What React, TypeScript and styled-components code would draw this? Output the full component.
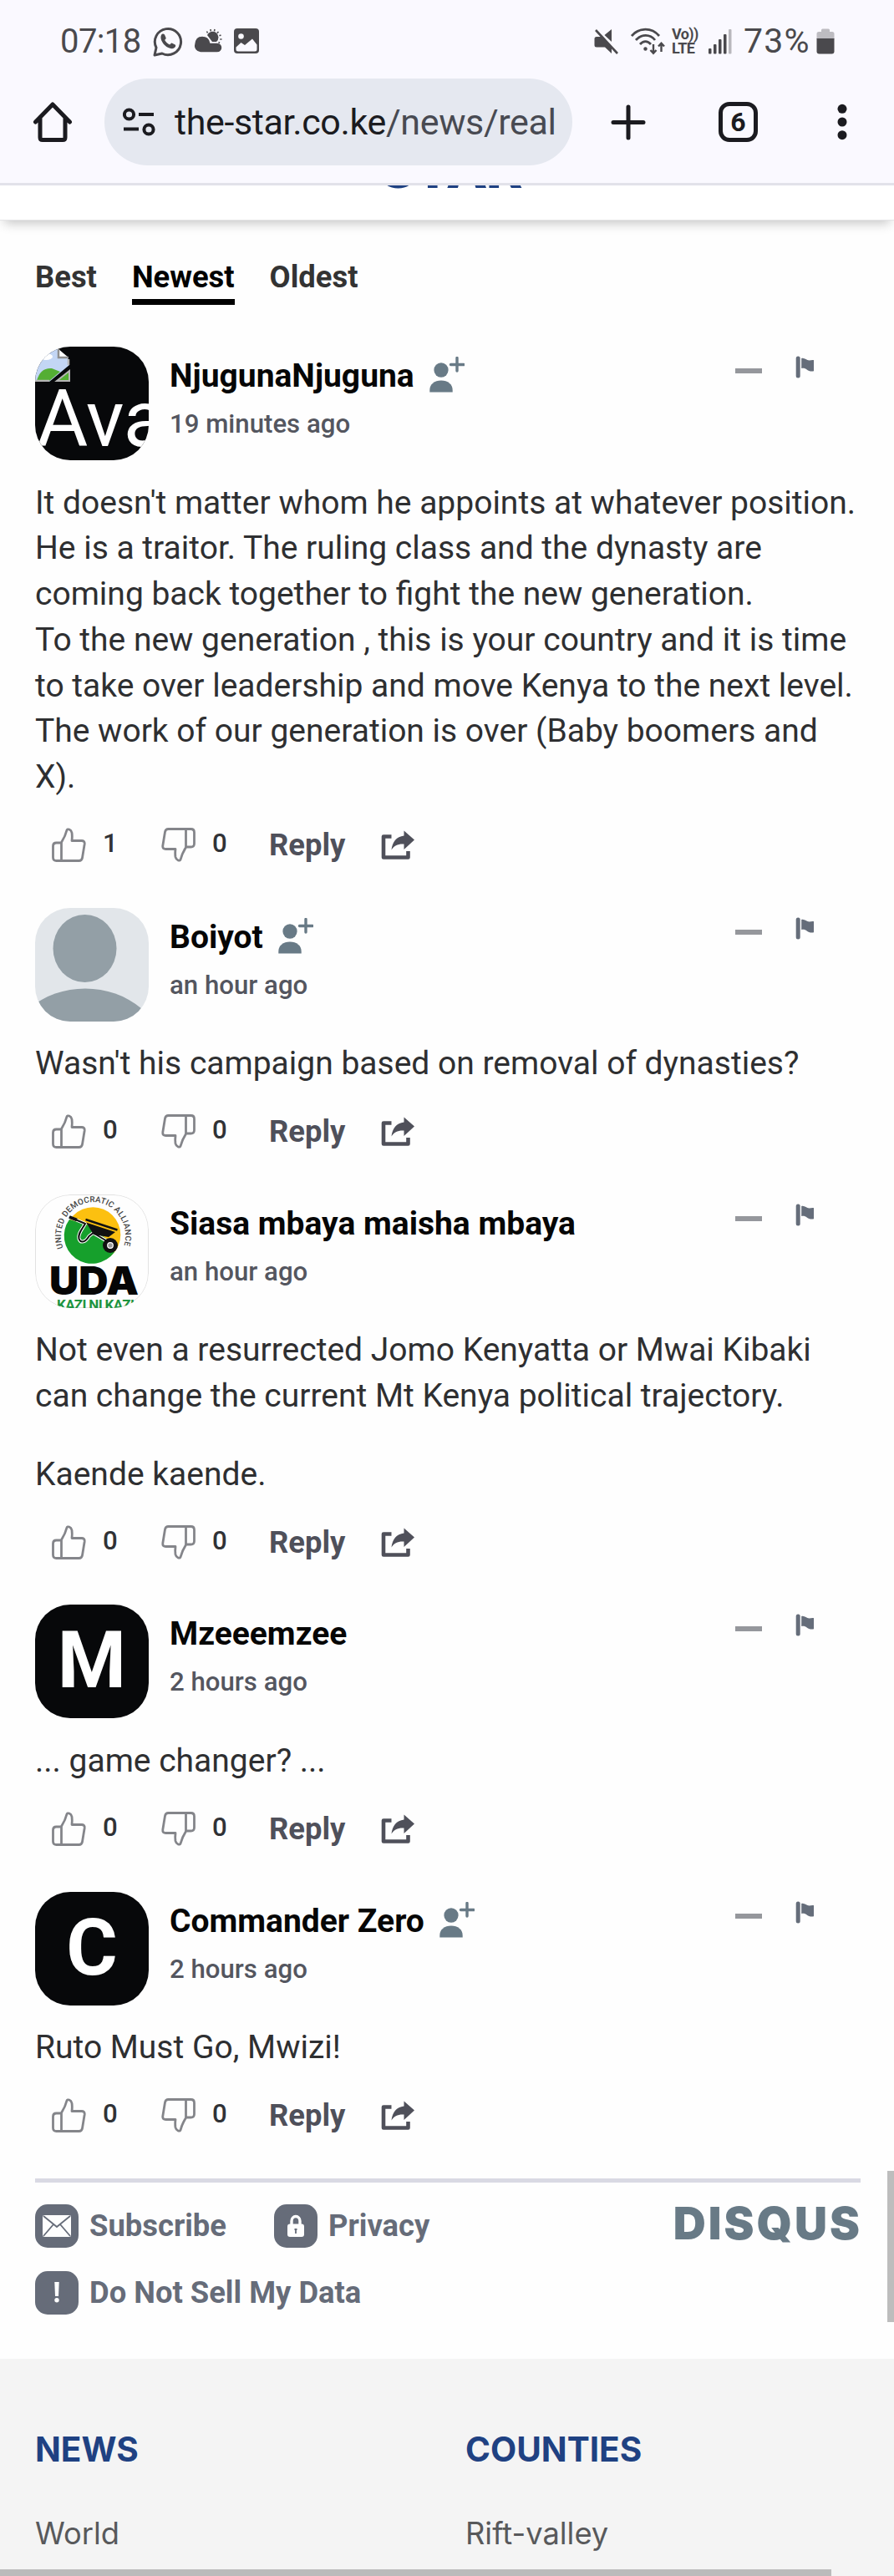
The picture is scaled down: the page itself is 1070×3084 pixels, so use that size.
import type { ReactNode } from "react";
import styled, { createGlobalStyle } from "styled-components";

interface IComment {
  id: number;
  name: string;
  time: string;
  text: string[];
  likes: number;
  canFollow: boolean;
  avatar: ReactNode;
}

// styled-components

const GlobalStyle = createGlobalStyle`
  * {
    box-sizing: border-box;
  }

  body {
    margin: 0;
    background-color: #fefefe;
    font-family: Roboto, "Liberation Sans", sans-serif;
  }

  svg {
    display: block;
    flex: none;
  }
`;

const Screen = styled.div`
  position: relative;
  width: 1070px;
  height: 3084px;
  overflow: hidden;
`;

const Browser = styled.header`
  height: 222px;
  background-color: #faf9ff;
  border-bottom: 3px solid #e2e2ea;
`;

const StatusBar = styled.div`
  display: flex;
  align-items: center;
  height: 94px;
  padding: 4px 71px 0 72px;
  color: #4a494d;
`;

const Clock = styled.span`
  width: 111px;
  font-size: 40px;
  letter-spacing: -0.6px;
`;

const StatusGroup = styled.div`
  display: flex;
  align-items: center;
  gap: 13px;
`;

const StatusRight = styled.div`
  display: flex;
  align-items: center;
  margin-left: auto;
`;

const WifiSlot = styled.div`
  margin-left: 14px;
`;

const VoLte = styled.div`
  width: 51px;
  padding-left: 7px;
  font-size: 18px;
  font-weight: 700;
  line-height: 17px;
  letter-spacing: -0.6px;
  white-space: nowrap;
`;

const Percent = styled.span`
  width: 87px;
  margin-left: 14px;
  font-size: 41px;
  letter-spacing: 1.2px;
`;

const Toolbar = styled.div`
  display: flex;
  align-items: center;
  height: 104px;
  padding-left: 39px;
`;

const UrlPill = styled.div`
  display: flex;
  align-items: center;
  width: 560px;
  height: 104px;
  margin: 0 46px 0 38px;
  padding-left: 22px;
  border-radius: 52px;
  background-color: #e5e8f0;
`;

const Url = styled.span`
  margin-left: 23px;
  font-size: 43px;
  letter-spacing: -0.36px;
  color: #1b1b20;
  white-space: nowrap;

  span {
    color: #484a52;
  }
`;

const TabCount = styled.div`
  display: flex;
  align-items: center;
  justify-content: center;
  width: 47px;
  height: 48px;
  margin: 0 95px 0 87px;
  border: 5px solid #1b1b20;
  border-radius: 13px;
  font-size: 32px;
  font-weight: 700;
  color: #1b1b20;
`;

const SiteHeader = styled.div`
  position: relative;
  height: 42px;
  background-color: #fff;
  border-bottom: 1px solid #e4e4e6;
  box-shadow: 0 8px 14px -5px rgba(0, 0, 0, 0.24);
`;

const LogoClip = styled.div`
  height: 41px;
  overflow: hidden;
`;

const Logo = styled.div`
  width: 180px;
  margin: -60px 0 0 454px;
  font-size: 68px;
  font-weight: 900;
  line-height: 80px;
  color: #1f4182;
`;

const Thread = styled.main`
  height: 2560px;
  padding: 47px 40px 0 42px;
`;

const SortTabs = styled.nav`
  display: flex;
  gap: 42px;
  height: 104px;
`;

const SortTab = styled.span<{ $active?: boolean }>`
  height: 54px;
  border-bottom: ${(props) => (props.$active ? "7px solid #000" : "none")};
  color: ${(props) => (props.$active ? "#000" : "#333")};
  font-size: 36.4px;
  font-weight: 700;
  line-height: 42px;
`;

const Comment = styled.article`
  margin-bottom: 44.8px;
`;

const CommentHead = styled.div`
  display: flex;
  height: 136px;
`;

const Avatar = styled.div<{ $bg?: string }>`
  flex: none;
  width: 136px;
  height: 136px;
  border-radius: 42px;
  overflow: hidden;
  background-color: ${(props) => props.$bg ?? "#07080a"};
`;

const Initial = styled.div`
  text-align: center;
  color: #fff;
  font-size: 94px;
  font-weight: 700;
  line-height: 134px;
`;

const AltText = styled.div`
  margin: -2px 0 0 2px;
  color: #fff;
  font-size: 94px;
  line-height: 94px;
`;

const Meta = styled.div`
  flex: 1;
  padding: 12px 0 0 25px;
`;

const NameRow = styled.div`
  display: flex;
  gap: 18px;
  height: 46px;
`;

const Name = styled.span`
  font-size: 39px;
  font-weight: 700;
  line-height: 46px;
  color: #060606;
`;

const Time = styled.div`
  margin-top: 17px;
  font-size: 31.2px;
  font-weight: 500;
  line-height: 36px;
  color: #54565f;
`;

const HeadTools = styled.div`
  display: flex;
  align-items: flex-start;
  gap: 40px;
  padding: 11px 55px 0 0;
`;

const Collapse = styled.div`
  width: 32px;
  height: 6px;
  margin-top: 15px;
  background-color: #95979c;
`;

const Message = styled.div`
  margin: 23.6px -20px 24px 0;
  font-size: 39px;
  line-height: 54.75px;
  color: #2e2f31;
  white-space: pre-line;

  p {
    margin: 0 0 39px;
  }

  p:last-child {
    margin-bottom: 0;
  }
`;

const Actions = styled.div`
  display: flex;
  align-items: center;
  height: 60px;
  padding-left: 20px;
  color: #4f505a;
`;

const Vote = styled.div`
  display: flex;
  align-items: center;
  gap: 20px;
  width: 131px;
  font-size: 31.2px;
  font-weight: 500;
  line-height: 36px;
  color: #303236;

  span {
    margin-top: -3px;
  }
`;

const Reply = styled.span`
  width: 134px;
  margin-left: -2px;
  font-size: 36.4px;
  font-weight: 700;
`;

const ThreadFooter = styled.div`
  display: flex;
  justify-content: space-between;
  margin-top: 1px;
  padding-top: 26px;
  border-top: 5px solid #d9d9e3;
`;

const FooterLinks = styled.div`
  display: flex;
  flex-wrap: wrap;
  gap: 28px 57px;
  width: 500px;
`;

const FooterLink = styled.div`
  display: flex;
  align-items: center;
  gap: 13px;
  font-size: 36.4px;
  font-weight: 700;
  line-height: 52px;
  color: #666c79;
`;

const Badge = styled.div`
  display: flex;
  align-items: center;
  justify-content: center;
  width: 52px;
  height: 52px;
  border-radius: 15px;
  background-color: #666c79;
`;

const Disqus = styled.div`
  height: 52px;
  font-family: Inter, sans-serif;
  font-size: 54px;
  font-weight: 900;
  line-height: 46px;
  letter-spacing: 3px;
  margin-right: -2px;
  color: #687a86;
`;

const SiteFooter = styled.footer`
  display: grid;
  grid-template-columns: 515px 1fr;
  height: 260px;
  padding: 84px 42px 0;
  background-color: #f4f4f4;
  font-family: Inter, sans-serif;
`;

const FooterTitle = styled.h3`
  margin: 0 0 51px;
  font-size: 40.5px;
  font-weight: 700;
  line-height: 50px;
  color: #1f4182;
`;

const FooterItem = styled.div`
  font-size: 36.3px;
  line-height: 48px;
  color: #58595b;
`;

const ScrollY = styled.div`
  position: absolute;
  right: 0;
  top: 2599px;
  width: 8px;
  height: 181px;
  background-color: #bdbdbd;
`;

const ScrollX = styled.div`
  position: absolute;
  left: 0;
  bottom: 0;
  width: 995px;
  height: 8px;
  background-color: #bbb;
`;

// icons

const WhatsAppIcon = () => (
  <svg width="36" height="37" viewBox="0 0 36 37" fill="none">
    <path d="M2 35l2-9A15.6 15.6 0 1 1 11 33z" stroke="#4a494d" strokeWidth="3" strokeLinejoin="round" />
    <path
      d="M10 11c1-2 3-2 4-.4l1.6 3.7c.4 1-.8 1.800-1.400 2.800 1.500 2.600 3.300 4.200 6 5.400 1-.8 1.700-2.300 2.900-1.800l3.500 1.700c1.300.8.3 3-1 3.900-3 2.200-8 .2-11-2.700C11 20 8.300 15 10 11z"
      fill="#4a494d"
    />
  </svg>
);

const WeatherIcon = () => (
  <svg width="34" height="30" viewBox="0 0 34 30" fill="#4a494d">
    <path d="M16 8a7 7 0 1 1 11 8H22z" />
    <path d="M8 29a8 8 0 0 1-7.500-10C1 12 5 9 10 9c5 0 9 3 10 8h8a6 6 0 0 1 0 12z" stroke="#faf9ff" strokeWidth="1.500" />
    <path
      d="M15.500 3.500l1 2M20 1l.3 2.300M25 1l-.5 2.300M29.500 4l-1.600 1.600M32.500 8l-2 .8M33.500 13h-2.200M31 17.500l-1.500-1"
      stroke="#4a494d"
      strokeWidth="1.600"
    />
  </svg>
);

const PictureIcon = () => (
  <svg width="32" height="32" viewBox="0 0 32 32">
    <rect x="1" y="1" width="30" height="30" rx="4" fill="#4a494d" />
    <circle cx="9.500" cy="10.500" r="3.300" fill="#faf9ff" />
    <path d="M3.500 23.500l6-5.500 4.500 3 9-7.500 5.500 7V26a2.500 2.500 0 0 1-2.500 2.500H6A2.500 2.500 0 0 1 3.500 26z" fill="#faf9ff" />
  </svg>
);

const MuteIcon = () => (
  <svg width="30" height="31" viewBox="0 0 30 31" fill="#4a494d">
    <path d="M12.500 8L21 1v15zM3 10h5.500L21 22.500V30l-8-7.500H3a2.500 2.500 0 0 1-2.500-2.500v-7.500A2.500 2.500 0 0 1 3 10z" />
    <path d="M2 2l26 28" stroke="#4a494d" strokeWidth="2.600" />
  </svg>
);

const WifiIcon = () => (
  <svg width="42" height="33" viewBox="0 0 42 33" fill="none" stroke="#4a494d" strokeWidth="2.800">
    <path d="M1 10C10-.5 25-.5 34 10M6 15c7-7.500 17-7.500 23 0M11 20c4-4.500 9-4.500 13 0" />
    <circle cx="17.500" cy="25.500" r="2.200" fill="#4a494d" stroke="none" />
    <path d="M27 20v10M23.500 27l3.500 3.700 3.500-3.700M36.500 29V19M33 22.500l3.500-3.700 3.500 3.700" strokeWidth="2.400" />
  </svg>
);

const SignalIcon = () => (
  <svg width="28" height="31" viewBox="0 0 28 31" fill="#4a494d">
    <rect x="0" y="24" width="3.500" height="6.500" rx="1" />
    <rect x="6" y="19" width="3.500" height="11.500" rx="1" />
    <rect x="12" y="13" width="3.500" height="17.500" rx="1" />
    <rect x="18" y="7" width="3.500" height="23.500" rx="1" />
    <rect x="24" y="1" width="3.500" height="29.500" rx="1" fill="#b9b8bd" />
  </svg>
);

const BatteryIcon = () => (
  <svg width="22" height="31" viewBox="0 0 22 31">
    <path d="M6 4V2q0-1.500 1.500-1.500h7Q16 .5 16 2v2h3q2.500 0 2.500 2.500V13H.5V6.500Q.5 4 3 4z" fill="#bdbcc1" />
    <path d="M.5 12h21v15.500q0 3-3 3h-15q-3 0-3-3z" fill="#4a494d" />
  </svg>
);

const HomeIcon = () => (
  <svg width="48" height="50" viewBox="0 0 48 50" fill="none" stroke="#1b1b20" strokeWidth="5" strokeLinecap="round">
    <path d="M3.500 25L24 4l20.500 21M9 21v22.500q0 3 3 3h24q3 0 3-3V21" strokeLinejoin="round" />
  </svg>
);

const TuneIcon = () => (
  <svg width="39" height="34" viewBox="0 0 39 34" fill="none" stroke="#1b1b20" strokeWidth="4">
    <circle cx="7.500" cy="8" r="5.600" />
    <circle cx="31" cy="26" r="5.600" />
    <path d="M19 8h18M1 25.500h18" />
  </svg>
);

const PlusIcon = () => (
  <svg width="42" height="43" viewBox="0 0 42 43" stroke="#1b1b20" strokeWidth="5" strokeLinecap="round">
    <path d="M21 3v37M3 21.500h36" />
  </svg>
);

const DotsIcon = () => (
  <svg width="12" height="44" viewBox="0 0 12 44" fill="#1b1b20">
    <circle cx="6" cy="6.300" r="5.500" />
    <circle cx="6" cy="22" r="5.500" />
    <circle cx="6" cy="37.700" r="5.500" />
  </svg>
);

const FollowIcon = () => (
  <svg width="42" height="43" viewBox="0 0 42 43" fill="#687a86">
    <ellipse cx="14" cy="16" rx="8.600" ry="8.800" />
    <path d="M.3 42.500V40C.3 33 6 28.500 14 28.500S27.700 33 27.700 40v2.500z" />
    <path d="M33 1.500v15.500M25.500 9.500h15.500" stroke="#687a86" strokeWidth="3.400" strokeLinecap="round" />
  </svg>
);

const FlagIcon = () => (
  <svg width="23" height="27" viewBox="0 0 23 27" fill="#656d7a">
    <rect x=".7" y=".5" width="5" height="26" rx="2.500" />
    <path d="M7.200 3C11 2 13 5.500 16.500 5.500c2 0 3.500-.7 5.500-.3v13c-3 .5-6 .3-8-1.500-2.300-2-4.500-2-6.800-1.700z" />
  </svg>
);

const ThumbUpIcon = () => (
  <svg width="41" height="41" viewBox="0 0 41 41" fill="none" stroke="#84858a" strokeWidth="2.800" strokeLinejoin="round">
    <path d="M11.500 39V17.500C15 12 17 7 18 2.800c.5-2 5-1 6 3.200.5 3.500.3 7 0 9.500h11.500q4.200 0 3.700 4l-2.700 16.500q-.6 3.500-4 3.500H5.500q-4 0-4-4V22q0-4 4-4h6" />
  </svg>
);

const ThumbDownIcon = () => (
  <svg width="41" height="41" viewBox="0 0 41 41" fill="none" stroke="#84858a" strokeWidth="2.800" strokeLinejoin="round">
    <path d="M29.500 2V23.500C26 29 24 34 23 38.200c-.5 2-5 1-6-3.200-.5-3.500-.3-7 0-9.500H5.500q-4.200 0-3.700-4L4.500 5q.6-3.500 4-3.500h27q4 0 4 4V19q0 4-4 4h-6" />
  </svg>
);

const ShareIcon = () => (
  <svg width="41" height="36" viewBox="0 0 41 36" fill="none">
    <path d="M12.500 7.500H3V32.500H32.500V25" stroke="#4f505a" strokeWidth="4.600" strokeLinejoin="round" />
    <path d="M27.500 .5L40 11.500 27.500 23v-6.500c-7-.5-12 2-15 7 1-9.500 6-16 15-17z" fill="#4f505a" />
  </svg>
);

const BrokenImageIcon = () => (
  <svg width="42" height="42" viewBox="0 0 42 42">
    <path d="M0 2h27l14 14v6L17 42H0z" fill="#c3d6f5" />
    <ellipse cx="13" cy="12" rx="8" ry="4" fill="#fff" />
    <path d="M2 41q4-16 18-15l10 4-13 11z" fill="#54ae34" />
    <path d="M28 3v10h12" fill="#fff" stroke="#8f8f8f" strokeWidth="2.500" />
    <path d="M40 15v7M0 41h17" stroke="#b5b5b5" strokeWidth="2.500" />
    <path d="M41 29v12H26z" fill="#54ae34" stroke="#b5b5b5" strokeWidth="2" />
  </svg>
);

const PersonPicture = () => (
  <svg width="136" height="136" viewBox="0 0 136 136" fill="#939fa6">
    <ellipse cx="59.500" cy="48.500" rx="38" ry="40.500" />
    <ellipse cx="60" cy="176" rx="94" ry="79.500" />
  </svg>
);

const UdaPicture = () => (
  <svg width="136" height="136" viewBox="0 0 136 136">
    <rect x=".5" y=".5" width="135" height="135" rx="41.500" fill="#fefefe" stroke="#e2e2e2" />
    <circle cx="69.300" cy="48.300" r="33" fill="#fcc010" />
    <path d="M41 30A33 33 0 1 0 95 69L88 55 62 36z" fill="#16a02c" />
    <g fill="none" strokeLinejoin="round">
      <path d="M41 27l19 8c-4 7-9 12-7.500 18 2 6 8 4 12-3l5-4 20 12" stroke="#fff" strokeWidth="4" />
      <path d="M41 27l19 8c-4 7-9 12-7.500 18 2 6 8 4 12-3l5-4 20 12" stroke="#111" strokeWidth="2" />
    </g>
    <path d="M41 27l9 3.500" stroke="#111" strokeWidth="4" />
    <path d="M60.500 30l38 12.500" stroke="#111" strokeWidth="2.500" />
    <path d="M61 33.500l35 11.500-8 6-18-3z" fill="#111" />
    <circle cx="90" cy="61" r="9" fill="#111" />
    <circle cx="90" cy="61" r="3.300" fill="#999" stroke="#fff" strokeWidth="1.200" />
    <path id="arc" d="M33.500 64A38.500 40.500 0 1 1 105.500 64" fill="none" />
    <text fontSize="9.800" fontWeight="500" fill="#444" fontFamily="Roboto, sans-serif">
      <textPath href="#arc" textLength="150">
        UNITED DEMOCRATIC ALLIANCE
      </textPath>
    </text>
    <text x="17" y="120" textLength="107" lengthAdjust="spacingAndGlyphs" fontSize="47" fontWeight="900" fill="#060606" fontFamily="Inter, sans-serif">
      UDA
    </text>
    <text x="26" y="137.500" textLength="93" fontSize="17" fontWeight="700" fill="#1d9440" fontFamily="Roboto, sans-serif">
      KAZI NI KAZI
    </text>
  </svg>
);

const MailIcon = () => (
  <svg width="34" height="26" viewBox="0 0 34 26">
    <rect x="0" y="0" width="34" height="26" rx="2" fill="#fefefe" />
    <path d="M1 1l16 13L33 1M1 25l12-14M33 25L21 11" fill="none" stroke="#666c79" strokeWidth="1.800" />
  </svg>
);

const LockIcon = () => (
  <svg width="20" height="27" viewBox="0 0 20 27">
    <path d="M5 13V8a5 5.500 0 0 1 10 0v5" fill="none" stroke="#fefefe" strokeWidth="3.400" />
    <rect x="0" y="11.500" width="20" height="15.500" rx="3" fill="#fefefe" />
    <path d="M10 17v6M8.500 18h3" stroke="#666c79" strokeWidth="1.800" />
  </svg>
);

const AlertIcon = () => (
  <svg width="6" height="25" viewBox="0 0 6 25" fill="#fefefe">
    <path d="M.3 0h5.400L5 17H1z" />
    <circle cx="3" cy="21.800" r="2.700" />
  </svg>
);

const comments: IComment[] = [
  {
    id: 1,
    name: "NjugunaNjuguna",
    time: "19 minutes ago",
    text: [
      "It doesn't matter whom he appoints at whatever position.\nHe is a traitor. The ruling class and the dynasty are\ncoming back together to fight the new generation.\nTo the new generation , this is your country and it is time\nto take over leadership and move Kenya to the next level.\nThe work of our generation is over (Baby boomers and\nX).",
    ],
    likes: 1,
    canFollow: true,
    avatar: (
      <Avatar>
        <BrokenImageIcon />
        <AltText>Avatar</AltText>
      </Avatar>
    ),
  },
  {
    id: 2,
    name: "Boiyot",
    time: "an hour ago",
    text: ["Wasn't his campaign based on removal of dynasties?"],
    likes: 0,
    canFollow: true,
    avatar: (
      <Avatar $bg="#e2e6ea">
        <PersonPicture />
      </Avatar>
    ),
  },
  {
    id: 3,
    name: "Siasa mbaya maisha mbaya",
    time: "an hour ago",
    text: [
      "Not even a resurrected Jomo Kenyatta or Mwai Kibaki\ncan change the current Mt Kenya political trajectory.",
      "Kaende kaende.",
    ],
    likes: 0,
    canFollow: false,
    avatar: (
      <Avatar $bg="#fefefe">
        <UdaPicture />
      </Avatar>
    ),
  },
  {
    id: 4,
    name: "Mzeeemzee",
    time: "2 hours ago",
    text: ["... game changer? ..."],
    likes: 0,
    canFollow: false,
    avatar: (
      <Avatar>
        <Initial>M</Initial>
      </Avatar>
    ),
  },
  {
    id: 5,
    name: "Commander Zero",
    time: "2 hours ago",
    text: ["Ruto Must Go, Mwizi!"],
    likes: 0,
    canFollow: true,
    avatar: (
      <Avatar>
        <Initial>C</Initial>
      </Avatar>
    ),
  },
];

export default function App() {
  return (
    <Screen>
      <GlobalStyle />
      <Browser>
        <StatusBar>
          <Clock>07:18</Clock>
          <StatusGroup>
            <WhatsAppIcon />
            <WeatherIcon />
            <PictureIcon />
          </StatusGroup>
          <StatusRight>
            <MuteIcon />
            <WifiSlot>
              <WifiIcon />
            </WifiSlot>
            <VoLte>
              Vo))
              <br />
              LTE
            </VoLte>
            <SignalIcon />
            <Percent>73%</Percent>
            <BatteryIcon />
          </StatusRight>
        </StatusBar>
        <Toolbar>
          <HomeIcon />
          <UrlPill>
            <TuneIcon />
            <Url>
              the-star.co.ke<span>/news/real</span>
            </Url>
          </UrlPill>
          <PlusIcon />
          <TabCount>6</TabCount>
          <DotsIcon />
        </Toolbar>
      </Browser>

      <SiteHeader>
        <LogoClip>
          <Logo>STAR</Logo>
        </LogoClip>
      </SiteHeader>

      <Thread>
        <SortTabs>
          <SortTab>Best</SortTab>
          <SortTab $active>Newest</SortTab>
          <SortTab>Oldest</SortTab>
        </SortTabs>
        {comments.map((comment) => (
          <Comment key={comment.id}>
            <CommentHead>
              {comment.avatar}
              <Meta>
                <NameRow>
                  <Name>{comment.name}</Name>
                  {comment.canFollow && <FollowIcon />}
                </NameRow>
                <Time>{comment.time}</Time>
              </Meta>
              <HeadTools>
                <Collapse />
                <FlagIcon />
              </HeadTools>
            </CommentHead>
            <Message>
              {comment.text.map((line) => (
                <p key={line}>{line}</p>
              ))}
            </Message>
            <Actions>
              <Vote>
                <ThumbUpIcon />
                <span>{comment.likes}</span>
              </Vote>
              <Vote>
                <ThumbDownIcon />
                <span>0</span>
              </Vote>
              <Reply>Reply</Reply>
              <ShareIcon />
            </Actions>
          </Comment>
        ))}
        <ThreadFooter>
          <FooterLinks>
            <FooterLink>
              <Badge>
                <MailIcon />
              </Badge>
              Subscribe
            </FooterLink>
            <FooterLink>
              <Badge>
                <LockIcon />
              </Badge>
              Privacy
            </FooterLink>
            <FooterLink>
              <Badge>
                <AlertIcon />
              </Badge>
              Do Not Sell My Data
            </FooterLink>
          </FooterLinks>
          <Disqus>DISQUS</Disqus>
        </ThreadFooter>
      </Thread>

      <SiteFooter>
        <div>
          <FooterTitle>NEWS</FooterTitle>
          <FooterItem>World</FooterItem>
        </div>
        <div>
          <FooterTitle>COUNTIES</FooterTitle>
          <FooterItem>Rift-valley</FooterItem>
        </div>
      </SiteFooter>
      <ScrollY />
      <ScrollX />
    </Screen>
  );
}
